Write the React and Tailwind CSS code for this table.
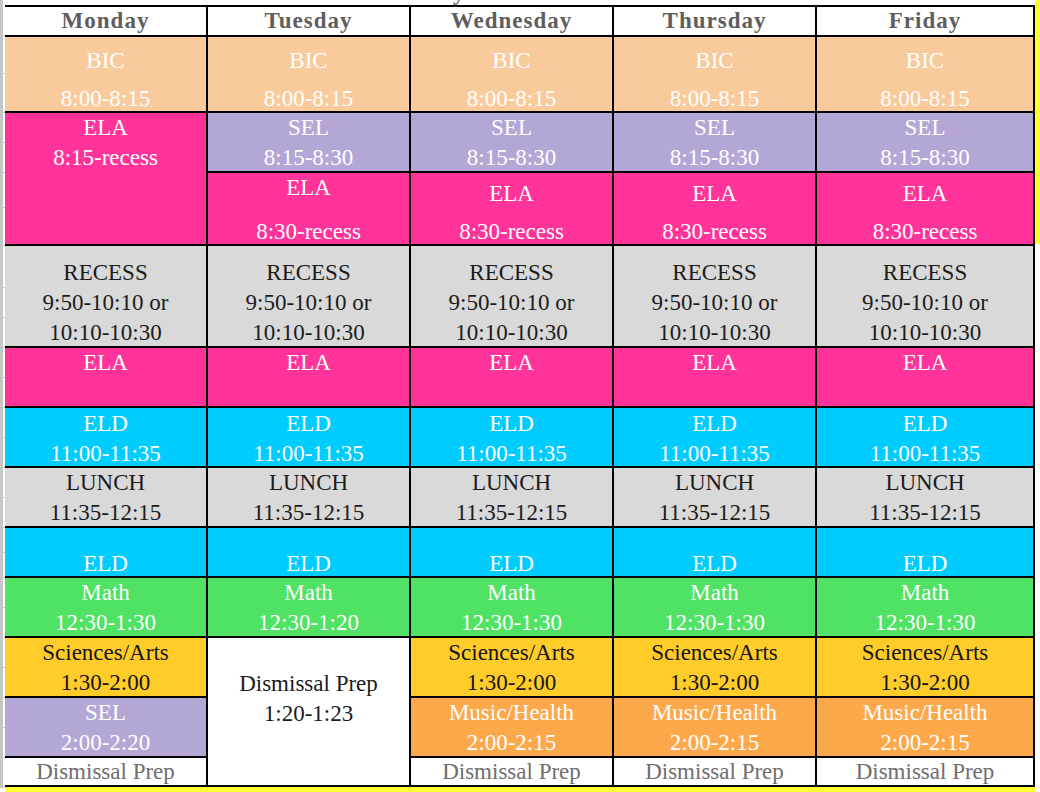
// App.jsx

import React from "react";

// --- Helper Components ---

// Spreadsheet row-header strip on the far left (gray bar with row ticks)
const ROW_TICKS = [
  "h-[36px]", "h-[38px]", "h-[39px]", "h-[30px]", "h-[30px]", "h-[35px]", "h-[38px]",
  "h-[42px]", "h-[30px]", "h-[30px]", "h-[30px]", "h-[30px]", "h-[30px]", "h-[30px]",
  "h-[30px]", "h-[30px]", "h-[25px]", "h-[25px]", "h-[30px]", "h-[30px]", "h-[30px]",
  "h-[30px]", "h-[30px]", "h-[30px]", "h-[30px]",
];

const RowStrip = () => (
  <div className="flex w-[5px] shrink-0 flex-col overflow-hidden">
    {ROW_TICKS.map((h, i) => (
      <div key={i} className={`${h} shrink-0 border-b border-l-[3px] border-[#c6c6c6]`} />
    ))}
  </div>
);

// One cell of the timetable
const Cell = ({ bg, fg = "text-white", pad = "", lh = "leading-[30px]", span = "", children }) => (
  <div className={`${bg} ${fg} ${pad} ${lh} ${span} flex flex-col items-center overflow-hidden text-center text-[23px]`}>
    {children}
  </div>
);

const Line = ({ className = "", children }) => <span className={`block whitespace-nowrap ${className}`}>{children}</span>;

const DAYS = ["Monday", "Tuesday", "Wednesday", "Thursday", "Friday"];

const PEACH = "bg-[#f9cb9c]";
const PINK = "bg-[#ff3399]";
const LAVENDER = "bg-[#b4a7d6]";
const GRAY = "bg-[#d9d9d9]";
const CYAN = "bg-[#00ccff]";
const GREEN = "bg-[#50e264]";
const GOLD = "bg-[#ffcc29]";
const ORANGE = "bg-[#fea84c]";

function App() {
  const rest = [1, 2, 3]; // Wednesday..Friday share most cells

  return (
    <div className="flex h-[792px] w-[1040px] overflow-hidden bg-white font-['Liberation_Serif',serif]">
      <RowStrip />

      <div className="flex w-[1030px] shrink-0 flex-col">
        {/* clipped title above the table */}
        <div className="h-[5px] overflow-hidden">
          <div className="-mt-[20px] pl-[448px] text-[23px] font-bold leading-[26px] text-[#5e5e5e]">y</div>
        </div>

        {/* Timetable */}
        <div className="grid grid-cols-[201px_201px_201px_201px_216px] grid-rows-[28px_74px_58px_71px_100px_58px_58px_58px_48px_58px_58px_58px_27px] gap-[2px] border-t-2 border-r-2 border-b-2 border-black bg-black">
          {/* Header */}
          {DAYS.map((d) => (
            <div key={d} className="bg-white text-center text-[23px] font-bold leading-[28px] tracking-[1px] text-[#5e5e5e]">
              {d}
            </div>
          ))}

          {/* BIC */}
          {DAYS.map((d) => (
            <Cell key={d} bg={PEACH} pad="pt-[5px]" lh="leading-[38px]">
              <Line>BIC</Line>
              <Line>8:00-8:15</Line>
            </Cell>
          ))}

          {/* ELA (Monday, merged) + SEL */}
          <Cell bg={PINK} span="row-span-2">
            <Line>ELA</Line>
            <Line>8:15-recess</Line>
          </Cell>
          {[0, 1, 2, 3].map((i) => (
            <Cell key={i} bg={LAVENDER}>
              <Line>SEL</Line>
              <Line>8:15-8:30</Line>
            </Cell>
          ))}

          {/* ELA 8:30-recess */}
          <Cell bg={PINK}>
            <Line>ELA</Line>
            <Line className="mt-[14px]">8:30-recess</Line>
          </Cell>
          {rest.map((i) => (
            <Cell key={i} bg={PINK} pad="pt-[6px]">
              <Line>ELA</Line>
              <Line className="mt-[8px]">8:30-recess</Line>
            </Cell>
          ))}

          {/* Recess */}
          {DAYS.map((d) => (
            <Cell key={d} bg={GRAY} fg="text-[#1c1c1c]" pad="pt-[12px]">
              <Line>RECESS</Line>
              <Line>9:50-10:10 or</Line>
              <Line>10:10-10:30</Line>
            </Cell>
          ))}

          {/* ELA */}
          {DAYS.map((d) => (
            <Cell key={d} bg={PINK}>
              <Line>ELA</Line>
            </Cell>
          ))}

          {/* ELD */}
          {DAYS.map((d) => (
            <Cell key={d} bg={CYAN} pad="pt-[1px]">
              <Line>ELD</Line>
              <Line>11:00-11:35</Line>
            </Cell>
          ))}

          {/* Lunch */}
          {DAYS.map((d) => (
            <Cell key={d} bg={GRAY} fg="text-[#1c1c1c]">
              <Line>LUNCH</Line>
              <Line>11:35-12:15</Line>
            </Cell>
          ))}

          {/* ELD (afternoon) */}
          {DAYS.map((d) => (
            <Cell key={d} bg={CYAN} pad="pt-[21px]">
              <Line>ELD</Line>
            </Cell>
          ))}

          {/* Math */}
          {DAYS.map((d) => (
            <Cell key={d} bg={GREEN}>
              <Line>Math</Line>
              <Line>{d === "Tuesday" ? "12:30-1:20" : "12:30-1:30"}</Line>
            </Cell>
          ))}

          {/* Sciences/Arts + Tuesday dismissal */}
          <Cell bg={GOLD} fg="text-[#161616]">
            <Line>Sciences/Arts</Line>
            <Line>1:30-2:00</Line>
          </Cell>
          <Cell bg="bg-white" fg="text-[#1c1c1c]" pad="pt-[31px]" span="row-span-3">
            <Line>Dismissal Prep</Line>
            <Line>1:20-1:23</Line>
          </Cell>
          {rest.map((i) => (
            <Cell key={i} bg={GOLD} fg="text-[#161616]">
              <Line>Sciences/Arts</Line>
              <Line>1:30-2:00</Line>
            </Cell>
          ))}

          {/* SEL / Music-Health */}
          <Cell bg={LAVENDER}>
            <Line>SEL</Line>
            <Line>2:00-2:20</Line>
          </Cell>
          {rest.map((i) => (
            <Cell key={i} bg={ORANGE}>
              <Line>Music/Health</Line>
              <Line>2:00-2:15</Line>
            </Cell>
          ))}

          {/* Dismissal Prep */}
          {[0, 1, 2, 3].map((i) => (
            <Cell key={i} bg="bg-white" fg="text-[#6e6e6e]" lh="leading-[28px]">
              <Line>Dismissal Prep</Line>
            </Cell>
          ))}
        </div>

        <div className="h-[5px] bg-[#ffff33]" />
      </div>

      {/* yellow edge on the right */}
      <div className="w-[5px] shrink-0">
        <div className="h-[244px] bg-[#ffff33]" />
      </div>
    </div>
  );
}

export default App;
